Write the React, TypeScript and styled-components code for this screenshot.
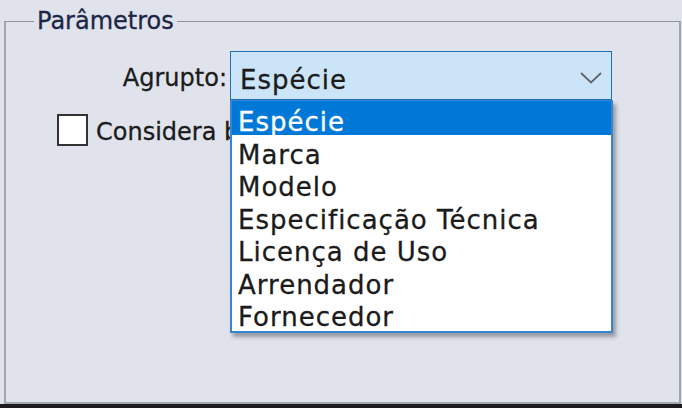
import React from "react";
import styled, { createGlobalStyle } from "styled-components";

const Global = createGlobalStyle`
  html, body { margin: 0; padding: 0; }
  body {
    background: #e0e3eb;
    font-family: "DejaVu Sans", Verdana, sans-serif;
    color: #1b1b1b;
  }
`;

const Page = styled.div`
  box-sizing: border-box;
  width: 682px;
  height: 408px;
  padding: 7px 1px 0 4px;
  background: #e0e3eb;
  border-bottom: 4px solid #1c1c1c;
  overflow: hidden;
`;

const Group = styled.fieldset`
  box-sizing: border-box;
  margin: 0;
  padding: 0;
  width: 677px;
  height: 397px;
  border: 2px solid #a1a6b0;
  border-top-width: 1px;
  border-top-color: #8e939c;
`;

const Legend = styled.legend`
  margin-left: 28px;
  padding: 0 3px;
  font-size: 24px;
  line-height: 28px;
  color: #1c2646;
  -webkit-text-stroke: 0.3px currentColor;
`;

const Content = styled.div`
  display: flex;
  flex-direction: column;
  padding-top: 16px;
`;

const FieldRow = styled.div`
  display: grid;
  grid-template-columns: 224px 382px;
  align-items: center;
`;

const Label = styled.label`
  justify-self: end;
  padding-right: 3px;
  padding-top: 4px;
  font-size: 24px;
  line-height: 28px;
  -webkit-text-stroke: 0.3px currentColor;
`;

const ComboWrap = styled.div`
  position: relative;
`;

const Combo = styled.div`
  box-sizing: border-box;
  height: 49px;
  display: flex;
  align-items: center;
  justify-content: space-between;
  padding: 0 9px 0 9px;
  background: #cce4f7;
  border: 1px solid #1f6fb8;
`;

const ComboText = styled.span`
  padding-top: 8px;
  font-size: 26px;
  letter-spacing: 1px;
  line-height: 30px;
  -webkit-text-stroke: 0.3px currentColor;
`;

const Chevron = styled.svg`
  width: 22px;
  height: 12px;
  margin-top: 4px;
`;

const List = styled.ul`
  position: absolute;
  z-index: 2;
  top: 100%;
  left: 0;
  box-sizing: border-box;
  width: 383px;
  margin: 0;
  padding: 0 0 2px 0;
  list-style: none;
  background: #ffffff;
  border: 2px solid #3884d3;
  border-top-width: 1px;
  box-shadow: 3px 4px 4px rgba(60, 64, 72, 0.45);
`;

const Item = styled.li<{ $selected?: boolean }>`
  box-sizing: border-box;
  height: ${(p) => (p.$selected ? "34px" : "32.4px")};
  padding: ${(p) => (p.$selected ? "9px" : "8px")} 0 0 6px;
  font-size: 26px;
  letter-spacing: 1px;
  line-height: 24px;
  white-space: nowrap;
  background: ${(p) => (p.$selected ? "#0078d7" : "transparent")};
  color: ${(p) => (p.$selected ? "#ffffff" : "#1b1b1b")};
  -webkit-text-stroke: 0.3px currentColor;
`;

const CheckRow = styled.div`
  display: flex;
  align-items: center;
  gap: 8px;
  margin: 14px 0 0 51px;
`;

const CheckBox = styled.span`
  flex: none;
  box-sizing: border-box;
  width: 31px;
  height: 32px;
  background: #ffffff;
  border: 2px solid #333333;
`;

const CheckLabel = styled.span`
  max-width: 134px;
  overflow: hidden;
  font-size: 24px;
  line-height: 28px;
  padding-top: 4px;
  white-space: nowrap;
  -webkit-text-stroke: 0.3px currentColor;
`;

const options = [
  "Espécie",
  "Marca",
  "Modelo",
  "Especificação Técnica",
  "Licença de Uso",
  "Arrendador",
  "Fornecedor",
];

export default function App() {
  return (
    <>
      <Global />
      <Page>
        <Group>
          <Legend>Parâmetros</Legend>
          <Content>
            <FieldRow>
              <Label>Agrupto:</Label>
              <ComboWrap>
                <Combo>
                  <ComboText>Espécie</ComboText>
                  <Chevron viewBox="0 0 22 12">
                    <polyline
                      points="1,1 11,10.5 21,1"
                      fill="none"
                      stroke="#60656b"
                      strokeWidth="1.8"
                    />
                  </Chevron>
                </Combo>
                <List>
                  {options.map((o, i) => (
                    <Item key={o} $selected={i === 0}>
                      {o}
                    </Item>
                  ))}
                </List>
              </ComboWrap>
            </FieldRow>
            <CheckRow>
              <CheckBox />
              <CheckLabel>Considera bens baixados</CheckLabel>
            </CheckRow>
          </Content>
        </Group>
      </Page>
    </>
  );
}
